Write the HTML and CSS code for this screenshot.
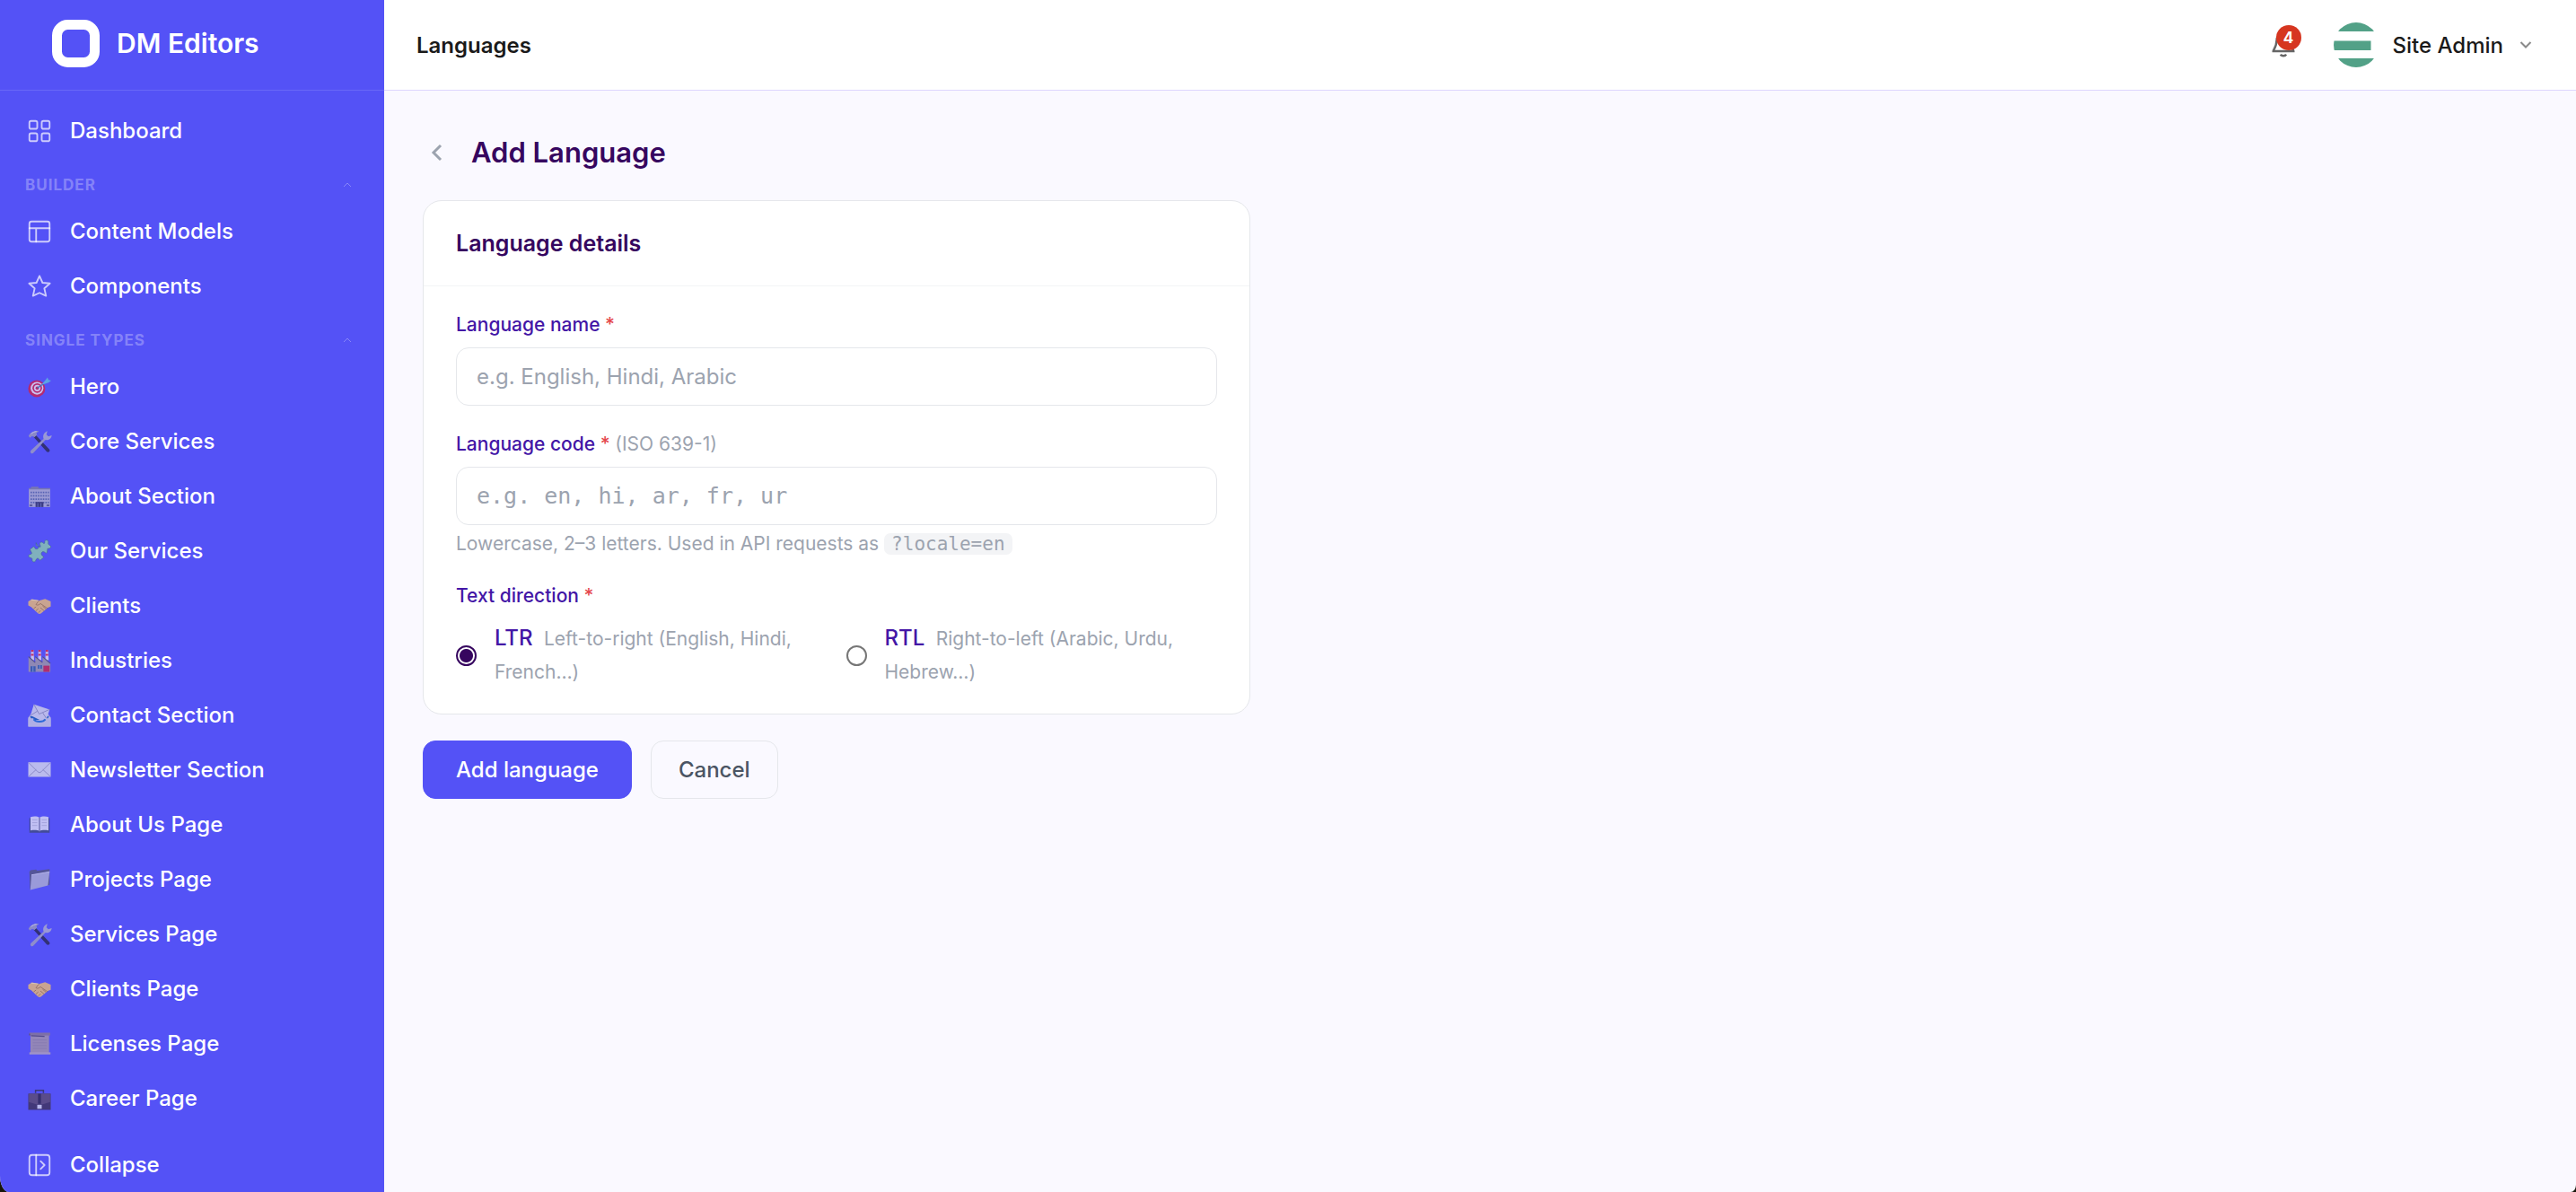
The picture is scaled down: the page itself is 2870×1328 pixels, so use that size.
FILE: index.html
```html
<!DOCTYPE html>
<html lang="en">
<head>
    <meta charset="UTF-8">
    <meta name="viewport" content="width=device-width, initial-scale=1.0">
    <title>Add Language - DM Editors</title>
    <link rel="stylesheet" href="styles.css">
</head>
<body>

<!-- shared icons -->
<svg class="sprite" aria-hidden="true">
    <symbol id="i-tools" viewBox="0 0 24 24">
        <path d="M6.5 7.5l11.8 13.3c.6.7 1.6.8 2.3.2s.7-1.6.1-2.3L8.500 6z" fill="#27264a"/>
        <path d="M16.3 8.8L4.6 19.6c-.8.8-.9 1.8-.2 2.5s1.7.5 2.4-.3L17.8 10z" fill="#a3a2bd"/>
        <path d="M16 9.8c-1.5-2.4-.5-6 3-7.3l-.8 3.2 1.7 1.6 3-.9c-.3 3.4-3.7 5-6.2 3.9z" fill="#b2b1cb"/>
        <path d="M2.2 7.2C3.4 4 6.6 2 10.6 2.4c.7.1.8.7.2.9-1.6.5-1.9 1.2-1 2.6L7.3 8.1C6 6.7 4.8 6.8 3.9 8.6z" fill="#9d9cb8"/>
        <path d="M4.5 5.2c1.4-1.4 3-2.1 4.8-2.2" stroke="#dcdcec" stroke-width=".8" fill="none"/>
    </symbol>
    <symbol id="i-hands" viewBox="0 0 24 24">
        <path d="M2 8l3.5-2 6 1.3L17 5.7 22 8v4.5l-2.6 1-5.9 5.1c-.9.7-2 .7-2.9 0L4.600 13 2 11.5z" fill="#f0c070"/>
        <path d="M11.5 7.3l-2.700 3.500c1.400 1 3 .3 4-.9l6.300 4.300M7 14.300l1.700-1.300M9 16.200l1.700-1.500M11.300 17.900l1.400-1.500M13 13.800l3 2.500M15 12.300l2.800 2.500" stroke="#a87a35" stroke-width=".7" fill="none" stroke-linecap="round"/>
        <path d="M4.500 6.600L11 7.300" stroke="#ffe6a6" stroke-width=".8"/>
    </symbol>
    <symbol id="i-up" viewBox="0 0 12 12">
        <path d="M2 8l4-4 4 4" fill="none" stroke="currentColor" stroke-width="1"/>
    </symbol>
</svg>

<div class="app">
    <aside class="sidebar">
        <div class="brand">
            <svg class="brand-logo" viewBox="0 0 53 53" aria-hidden="true">
                <rect x="5.500" y="5.500" width="42" height="42" rx="12" fill="none" stroke="#fff" stroke-width="11"/>
            </svg>
            <span class="brand-name">DM Editors</span>
        </div>

        <nav class="nav">
            <a href="#" class="nav-link">
                <svg class="icon line" viewBox="0 0 24 24"><rect x="3" y="3" width="7" height="7" rx="1.500"/><rect x="14" y="3" width="7" height="7" rx="1.500"/><rect x="3" y="14" width="7" height="7" rx="1.500"/><rect x="14" y="14" width="7" height="7" rx="1.500"/></svg>
                <span>Dashboard</span>
            </a>

            <button type="button" class="nav-group">Builder <svg class="group-arrow"><use href="#i-up"/></svg></button>
            <a href="#" class="nav-link">
                <svg class="icon line" viewBox="0 0 24 24"><rect x="3" y="3" width="18" height="18" rx="2"/><path d="M3 9h18M9 9v12"/></svg>
                <span>Content Models</span>
            </a>
            <a href="#" class="nav-link">
                <svg class="icon line" viewBox="0 0 24 24"><path d="M12 2.700l2.700 6.100 6.600.6-5 4.400 1.500 6.700-5.800-2.700-5.800 2.700 1.500-6.700-5-4.400 6.600-.6z"/></svg>
                <span>Components</span>
            </a>

            <button type="button" class="nav-group">Single Types <svg class="group-arrow"><use href="#i-up"/></svg></button>
            <a href="#" class="nav-link">
                <svg class="icon emoji" viewBox="0 0 24 24">
                    <circle cx="9.500" cy="13.500" r="7.600" fill="#d41f45"/>
                    <circle cx="9.800" cy="13.200" r="5.700" fill="#f4e6ee"/>
                    <circle cx="10" cy="13" r="4.300" fill="#d41f45"/>
                    <circle cx="10" cy="13" r="2.900" fill="#f4e6ee"/>
                    <circle cx="10" cy="13" r="1.500" fill="#d41f45"/>
                    <path d="M10 13l7.500-5" stroke="#3c86a8" stroke-width="1.200"/>
                    <path d="M14 9.800l3.500-4 1.600-2.300.9 2.300 2.400.6-2.400 1.800-3.500 1.200z" fill="#5fc0dd"/>
                </svg>
                <span>Hero</span>
            </a>
            <a href="#" class="nav-link"><svg class="icon emoji"><use href="#i-tools"/></svg><span>Core Services</span></a>
            <a href="#" class="nav-link">
                <svg class="icon emoji" viewBox="0 0 24 24">
                    <path d="M2.500 5h19v16.500h-19z" fill="#b4b4c8"/>
                    <path d="M2.500 4.600h19v1.200h-19zM4.500 3.300h6.500v1.500H4.500z" fill="#85849a"/>
                    <path d="M4 8.500h16.500M4 11.500h16.500M4 14.500h16.500M4 17.500h16.500" stroke="#57679c" stroke-width="1.500" stroke-dasharray="1.300 .9"/>
                    <path d="M8.500 17h7v4.500h-7z" fill="#34355e"/>
                    <path d="M10.500 18v3.500M13.300 18v3.500" stroke="#7f8dc0" stroke-width=".6"/>
                    <path d="M3.200 20h2.500M18.300 20h2.500" stroke="#44456c" stroke-width="1.300"/>
                </svg>
                <span>About Section</span>
            </a>
            <a href="#" class="nav-link">
                <svg class="icon emoji" viewBox="0 0 24 24">
                    <path d="M9 6.500l3.500 2c.8-.5.200-1.700-.3-2.600-.4-1.300 1.400-2.600 2.700-1.500.8.700 1.100 1.200 1.800.3-.3-1.300 0-2.300 1.200-2.500 1.500-.2 2.300 1 1.900 2.500-.2.900.3 1.400 1 1.800 1.300.6 1.700 1.500.9 2.500-.6.800-1.600.7-2.500.7l-.5 3.800c-1.400.8-1.800-.8-3-1-1.600-.2-2.700 1.500-1.800 2.900.5.900 1.800 1.100 1.800 2.200l-3 2.500c-1-.2-1-1.300-2-1.600-1.400-.3-1.700 1.200-2.200 2.300-.6 1.100-2.400 1-2.900-.2-.3-1 .2-1.600-.5-2.300-.9-.5-2.300-.4-2.800-1.500-.4-1.200.6-2 1.900-2 .8-.1 1-.6.8-1.300l-1.500-3 3.300-2.500c1 .2.800 1.600 1.900 2.100 1.600.5 3-.9 2.400-2.500-.4-1.300-2.300-1.300-2.100-3.100z" fill="#8fd0aa" stroke="#3b6f74" stroke-width=".5"/>
                </svg>
                <span>Our Services</span>
            </a>
            <a href="#" class="nav-link"><svg class="icon emoji"><use href="#i-hands"/></svg><span>Clients</span></a>
            <a href="#" class="nav-link">
                <svg class="icon emoji" viewBox="0 0 24 24">
                    <path d="M4.500 2.500h2.200l.5 9h-3zM11 2.500h2.200l.5 9h-3zM17.500 2.500h2.200l.5 9h-3z" fill="#eee4ea"/>
                    <path d="M4.500 3.300h2.200M4.400 6.800h2.400M11 3.300h2.200M10.900 6.800h2.400M17.500 3.300h2.200M17.400 6.800h2.400" stroke="#e0243c" stroke-width="1.700"/>
                    <path d="M2.200 8.500l6 5v-5l6.500 5v-5l7 6v7.500H2.200z" fill="#a39a9e"/>
                    <path d="M2.200 8.500l6 5.200M8.200 8.500l6.500 5.200M14.700 8.500l7 6" stroke="#54506c" stroke-width="1"/>
                    <path d="M4 17h4.500v5H4zM10.500 16h3.700v3.200h-3.700z" fill="#345f9c"/>
                    <path d="M6.200 17v5M12.300 16v3.200" stroke="#a3b5d0" stroke-width=".6"/>
                    <path d="M15.500 16.500h5.500V22h-5.500z" fill="#cf2242"/>
                </svg>
                <span>Industries</span>
            </a>
            <a href="#" class="nav-link">
                <svg class="icon emoji" viewBox="0 0 24 24">
                    <path d="M2 14l2.500-3.500h15L22 14v8H2z" fill="#d0d0de"/>
                    <path d="M3.500 12.500h17L19 16H5z" fill="#185fb5"/>
                    <path d="M7 2.200l14 4.500-2.700 8.300-5 1.500L4 12z" fill="#dadae8"/>
                    <path d="M7 2.200l4.700 8.600L21 6.700M4 12l6.200-3.800M18.300 15l-3.400-5.300" stroke="#8f8fae" stroke-width=".7" fill="none"/>
                    <path d="M2 14.500h4.500c1 4.500 10 4.500 11 0H22V22H2z" fill="#cfcfe0"/>
                    <path d="M6.800 15.500c2 2.800 8.600 2.800 10.400 0" stroke="#2273d0" stroke-width="1.500" fill="none"/>
                </svg>
                <span>Contact Section</span>
            </a>
            <a href="#" class="nav-link">
                <svg class="icon emoji" viewBox="0 0 24 24">
                    <path d="M2 5h20v13H2z" fill="#dedeea"/>
                    <path d="M2.500 5.500l8 8c.9.900 2.100.900 3 0l8-8M2.500 17.500l6.500-6M21.500 17.500l-6.500-6" stroke="#9696b4" stroke-width=".7" fill="none"/>
                </svg>
                <span>Newsletter Section</span>
            </a>
            <a href="#" class="nav-link">
                <svg class="icon emoji" viewBox="0 0 24 24">
                    <path d="M3 6h18v13H3z" fill="#3e4a7a"/>
                    <path d="M4 5c3-.9 6-.7 8 .5v12c-2-1-5-1.100-8-.5zM20 5c-3-.9-6-.7-8 .5v12c2-1 5-1.100 8-.5z" fill="#e4e4f2"/>
                    <path d="M12 5.500v12.500" stroke="#6e6f94" stroke-width="1"/>
                    <path d="M5.500 7.500h4.500M5.500 10h4.500M5.500 12.500h4.500M14 7.500h4.500M14 10h4.500M14 12.500h4.500" stroke="#b6b6cc" stroke-width=".6"/>
                </svg>
                <span>About Us Page</span>
            </a>
            <a href="#" class="nav-link">
                <svg class="icon emoji" viewBox="0 0 24 24">
                    <path d="M3 5l1-1.500 5-.5 1 1 11-1.500v14L3.500 20.500z" fill="#55567a"/>
                    <path d="M4.800 7.800L21 5l-1.500 12.200-15.700 4z" fill="#b2b3d0"/>
                    <path d="M4.800 7.800L21 5" stroke="#dcdcee" stroke-width=".7"/>
                </svg>
                <span>Projects Page</span>
            </a>
            <a href="#" class="nav-link"><svg class="icon emoji"><use href="#i-tools"/></svg><span>Services Page</span></a>
            <a href="#" class="nav-link"><svg class="icon emoji"><use href="#i-hands"/></svg><span>Clients Page</span></a>
            <a href="#" class="nav-link">
                <svg class="icon emoji" viewBox="0 0 24 24">
                    <path d="M4 4h16.500v16.500H4z" fill="#a998a4"/>
                    <path d="M3 2h18.500v2.500H3z" fill="#8c7b8c"/>
                    <path d="M4.500 4.700l12 .6M3.200 2.700v1.600" stroke="#514766" stroke-width=".9"/>
                    <path d="M3 19.500h18.800v1.900H3z" fill="#b8a9b8"/>
                    <path d="M6 8.500h12.500M6 11h12.500M6 13.500h12.500M6 16h12.500" stroke="#8f8196" stroke-width=".5"/>
                </svg>
                <span>Licenses Page</span>
            </a>
            <a href="#" class="nav-link">
                <svg class="icon emoji" viewBox="0 0 24 24">
                    <path d="M8.500 7V4.500h7V7" stroke="#33304f" stroke-width="1.200" fill="none"/>
                    <path d="M2 7.500h20V22H2z" fill="#3d3050"/>
                    <path d="M2.500 7.500h19v7.500L15 17H9l-6.500-2z" fill="#5c4a66"/>
                    <path d="M10.700 7.500h2.600v9h-2.600z" fill="#2c2340"/>
                    <path d="M10 17.500h4V21h-4z" fill="#d8d8e8"/>
                </svg>
                <span>Career Page</span>
            </a>
        </nav>

        <button type="button" class="nav-link collapse">
            <svg class="icon line" viewBox="0 0 24 24"><rect x="3" y="3" width="18" height="18" rx="2.500"/><path d="M9 3v18M13 8.500l3.500 3.500-3.500 3.500"/></svg>
            <span>Collapse</span>
        </button>
    </aside>

    <div class="main">
        <header class="topbar">
            <div class="topbar-title">Languages</div>
            <button type="button" class="bell" aria-label="Notifications">
                <svg class="bell-icon" viewBox="0 0 24 24"><path d="M6 8a6 6 0 0 1 12 0c0 5 3 9 3 9.500H3C3 17 6 13 6 8zM9.500 20.500c1 1.700 4 1.700 5 0"/></svg>
                <span class="badge">4</span>
            </button>
            <button type="button" class="user">
                <svg class="avatar" viewBox="0 0 50 50" aria-hidden="true">
                    <clipPath id="round"><circle cx="25" cy="25" r="25"/></clipPath>
                    <path d="M0 0h50v10H0zM0 20.500h41.500v10.500H0zM0 40h50v10H0z" fill="#52a187" clip-path="url(#round)"/>
                </svg>
                <span>Site Admin</span>
                <svg class="user-arrow" viewBox="0 0 24 24"><path d="M6.500 9l5.500 5.500L17.500 9"/></svg>
            </button>
        </header>

        <main class="content">
            <div class="page-head">
                <a href="#" class="back" aria-label="Back"><svg class="back-icon" viewBox="0 0 32 32"><path d="M20 8l-8 8 8 8"/></svg></a>
                <h1>Add Language</h1>
            </div>

            <form class="form">
                <section class="card">
                    <h2 class="card-title">Language details</h2>
                    <div class="card-body">
                        <div class="field">
                            <label for="name">Language name <span class="req">*</span></label>
                            <input type="text" id="name" class="input" placeholder="e.g. English, Hindi, Arabic">
                        </div>
                        <div class="field">
                            <label for="code">Language code <span class="req">*</span> <span class="muted">(ISO 639-1)</span></label>
                            <input type="text" id="code" class="input mono" placeholder="e.g. en, hi, ar, fr, ur">
                            <p class="help">Lowercase, 2–3 letters. Used in API requests as <code>?locale=en</code></p>
                        </div>
                        <fieldset class="field">
                            <legend>Text direction <span class="req">*</span></legend>
                            <div class="radios">
                                <label class="radio" for="ltr">
                                    <input type="radio" id="ltr" name="dir" checked>
                                    <span>LTR <span class="hint">Left-to-right (English, Hindi, French…)</span></span>
                                </label>
                                <label class="radio" for="rtl">
                                    <input type="radio" id="rtl" name="dir">
                                    <span>RTL <span class="hint">Right-to-left (Arabic, Urdu, Hebrew…)</span></span>
                                </label>
                            </div>
                        </fieldset>
                    </div>
                </section>

                <div class="actions">
                    <button type="submit" class="btn primary">Add language</button>
                    <button type="button" class="btn">Cancel</button>
                </div>
            </form>
        </main>
    </div>
</div>

</body>
</html>
```
FILE: styles.css
```css
* {
    box-sizing: border-box;
}
html {
    background: #17150a;
}
body {
    margin: 0;
    font-family: Inter, "Noto Sans", sans-serif;
    font-size: 24px;
    color: #1a1a1a;
}
button {
    font: inherit;
    color: inherit;
    background: none;
    border: 0;
    padding: 0;
    cursor: pointer;
}
a {
    color: inherit;
    text-decoration: none;
}
.sprite {
    display: none;
}
.app {
    display: flex;
    height: 100vh;
    overflow: hidden;
    background: #faf9ff;
    border-radius: 0 0 6px 10px / 0 0 8px 18px;
}

/* sidebar */
.sidebar {
    display: flex;
    flex-direction: column;
    flex: none;
    width: 428px;
    background: #5452f6;
    color: #fff;
}
.brand {
    display: flex;
    align-items: center;
    gap: 19px;
    flex: none;
    height: 101px;
    padding: 0 58px 4px;
    border-bottom: 1px solid rgba(255, 255, 255, 0.12);
}
.brand-logo {
    width: 53px;
    height: 53px;
}
.brand-name {
    font-size: 30px;
    font-weight: 600;
}
.nav {
    flex: 1;
    min-height: 0;
    padding-top: 14px;
    overflow: hidden;
}
.nav-link {
    display: flex;
    align-items: center;
    gap: 19px;
    width: 100%;
    height: 61px;
    padding: 0 29px;
    font-weight: 500;
}
.icon {
    flex: none;
    width: 30px;
    height: 30px;
}
.line {
    fill: none;
    stroke: rgba(255, 255, 255, 0.7);
    stroke-width: 1.5;
    stroke-linejoin: round;
    stroke-linecap: round;
}
.emoji {
    opacity: 0.75;
}
.nav-group {
    display: flex;
    align-items: center;
    justify-content: space-between;
    width: 100%;
    height: 51px;
    padding: 8px 35px 0 28px;
    font-size: 17px;
    font-weight: 700;
    letter-spacing: 1px;
    text-transform: uppercase;
    color: rgba(255, 255, 255, 0.3);
}
.group-arrow {
    width: 12px;
    height: 12px;
}
.collapse {
    flex: none;
}

/* top bar */
.main {
    flex: 1;
    min-width: 0;
}
.topbar {
    display: flex;
    align-items: center;
    height: 101px;
    padding: 0 44px 0 36px;
    background: #fff;
    border-bottom: 1px solid #ddd6fe;
}
.topbar-title {
    flex: 1;
    font-weight: 600;
}
.bell {
    position: relative;
    height: 32px;
    margin-right: 41px;
}
.bell-icon {
    display: block;
    width: 30px;
    height: 30px;
    fill: none;
    stroke: #666;
    stroke-width: 2;
}
.badge {
    position: absolute;
    top: -6px;
    right: -5px;
    width: 28px;
    height: 28px;
    border-radius: 50%;
    background: #d63620;
    color: #fff;
    font-size: 17px;
    font-weight: 700;
    line-height: 28px;
}
.user {
    display: flex;
    align-items: center;
    font-weight: 500;
}
.avatar {
    width: 50px;
    height: 50px;
    margin-right: 16px;
}
.user-arrow {
    width: 24px;
    height: 24px;
    margin-left: 13px;
    fill: none;
    stroke: #8a8a8a;
    stroke-width: 2;
}

/* page */
.content {
    padding: 49px 43px;
}
.page-head {
    display: flex;
    align-items: center;
    gap: 22px;
    height: 40px;
    margin-bottom: 33px;
}
.back-icon {
    display: block;
    width: 32px;
    height: 32px;
    fill: none;
    stroke: #9ca3af;
    stroke-width: 3;
}
h1 {
    margin: 0;
    font-size: 31px;
    font-weight: 600;
    line-height: 40px;
    color: #36065f;
}
.form {
    max-width: 922px;
}
.card {
    background: #fff;
    border: 1px solid #e5e7eb;
    border-radius: 21px;
}
.card-title {
    margin: 0;
    padding: 32px 36px;
    border-bottom: 1px solid #f3f4f6;
    font-size: 25px;
    font-weight: 600;
    line-height: 30px;
    color: #36065f;
}
.card-body {
    display: flex;
    flex-direction: column;
    gap: 28px;
    padding: 28px 36px;
}
.field {
    margin: 0;
    padding: 0;
    border: 0;
}
.field > label,
legend {
    display: block;
    margin-bottom: 10px;
    padding: 0;
    font-size: 21px;
    font-weight: 500;
    line-height: 30px;
    color: #4316a6;
}
.req {
    color: #e5484d;
}
.muted {
    font-weight: 400;
    color: #9ca3af;
}
.input {
    display: block;
    width: 100%;
    height: 65px;
    padding: 0 22px;
    border: 1px solid #e5e7eb;
    border-radius: 14px;
    background: #fff;
    font-family: inherit;
    font-size: 24px;
}
.input::placeholder {
    color: #9ca3af;
}
.mono {
    font-family: "DejaVu Sans Mono", monospace;
    font-size: 25px;
}
.help {
    margin: 6px 0 0;
    font-size: 21px;
    line-height: 30px;
    color: #9ca3af;
}
code {
    padding: 0 8px;
    border-radius: 7px;
    background: #f3f4f6;
    font-family: "DejaVu Sans Mono", monospace;
    font-size: 21px;
}
.radios {
    display: grid;
    grid-template-columns: 1fr 1fr;
    gap: 21px;
    padding-top: 4px;
}
.radio {
    display: flex;
    align-items: center;
    gap: 20px;
    font-weight: 500;
    line-height: 36px;
    color: #4316a6;
}
.radio input {
    appearance: none;
    flex: none;
    width: 23px;
    height: 23px;
    margin: 0;
    border: 2px solid #767676;
    border-radius: 50%;
    background: #fff;
}
.radio input:checked {
    border-color: #36065f;
    background: radial-gradient(circle, #36065f 7px, #fff 8px);
}
.hint {
    margin-left: 6px;
    font-size: 21px;
    font-weight: 400;
    color: #9ca3af;
}
.actions {
    display: flex;
    gap: 21px;
    margin-top: 29px;
}
.btn {
    height: 65px;
    padding: 0 30px;
    border: 1px solid #e5e7eb;
    border-radius: 14px;
    font-weight: 500;
    color: #4b5563;
}
.primary {
    padding: 0 36px;
    border-color: #5452f6;
    background: #5452f6;
    color: #fff;
}
```
